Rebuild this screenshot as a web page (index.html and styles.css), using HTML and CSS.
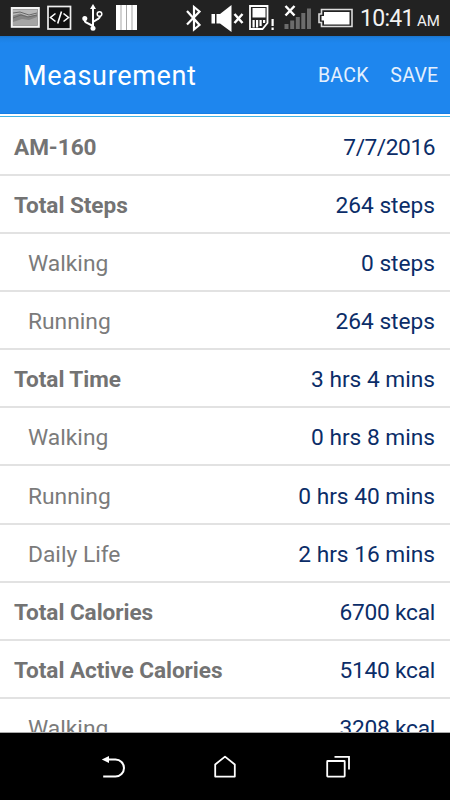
FILE: index.html
```
<!DOCTYPE html>
<html lang="en">
<head>
    <meta charset="UTF-8">
    <meta name="viewport" content="width=device-width, initial-scale=1.0">
    <title>Measurement</title>
    <link rel="stylesheet" href="styles.css">
</head>
<body>
    <div class="status-bar">
        <div class="status-icons">
            <!-- Screenshot saved -->
            <svg width="30" height="36" viewBox="0 0 30 36">
                <rect x="1.8" y="8" width="27" height="18.8" fill="#858585" stroke="#f4f4f4" stroke-width="2"/>
                <path d="M3 9.500h24v5l-9 2-8-3-7 2z" fill="#b9b9b9"/>
                <path d="M3 13l7-1 9 3 8-2M3 18l8-3 7 2 9-2" fill="none" stroke="#686868"/>
                <path d="M3 22l9-3 7 1 8-3v8H3z" fill="#a5a5a5"/>
            </svg>
            <!-- Developer -->
            <svg width="26" height="36" viewBox="0 0 26 36">
                <rect x="2" y="6.5" width="22.5" height="22.5" fill="#111" stroke="#eee" stroke-width="1.7"/>
                <path d="M9.5 13.5l-5 4 5 4M17.500 13.5l5 4-5 4M15.500 11.5l-3.8 12" fill="none" stroke="#fff" stroke-width="1.6"/>
            </svg>
            <!-- USB -->
            <svg width="24" height="36" viewBox="0 0 24 36">
                <path d="M11 8v20M11 26L4 22.500Q2.500 21.500 2.500 19M11 22l5-3q2-1 2-3" fill="none" stroke="#fff" stroke-width="2"/>
                <path d="M11 4l3 5H8z" fill="#fff"/>
                <circle cx="2.800" cy="18.500" r="2.500" fill="#fff"/>
                <circle cx="11" cy="28.300" r="2.500" fill="#fff"/>
                <circle cx="17.500" cy="14" r="2.300" fill="none" stroke="#fff" stroke-width="1.500"/>
            </svg>
            <!-- Carrier bars -->
            <svg width="22" height="36" viewBox="0 0 22 36">
                <rect y="5" width="21" height="25" fill="#a8a8a8"/>
                <path d="M0 5h4.500v25H0zM5.500 5h4.500v25H5.500zM11 5h4.500v25H11zM16.500 5h4.500v25h-4.500z" fill="#fff"/>
            </svg>
        </div>
        <div class="status-system">
            <!-- Bluetooth -->
            <svg class="bluetooth" width="18" height="36" viewBox="0 0 18 36">
                <path d="M2 11l12.500 14L9 29.500V7l5.500 4.500L2 24.500" fill="none" stroke="#fff" stroke-width="2.200"/>
            </svg>
            <!-- Muted -->
            <svg class="muted" width="34" height="36" viewBox="0 0 34 36">
                <path d="M1.500 14H5v9.500H1.500zM6.500 14H10L21.500 5v27L10 23.500H6.500z" fill="#fff"/>
                <path d="M24.500 14l8 9M32.500 14l-8 9" stroke="#fff" stroke-width="2.500"/>
            </svg>
            <!-- SD card warning -->
            <svg class="sd-card" width="28" height="36" viewBox="0 0 28 36">
                <path d="M2 6h17.500v17l-5 6H2z" fill="none" stroke="#fff" stroke-width="1.800"/>
                <path d="M4.500 8h13v9.500h-13zM4.500 20h2.200v7.500H4.500zM8 20h2.200v7.500H8zM11.500 20h2.200v6h-2.200zM15 20h2.200v3H15z" fill="#fff"/>
                <path d="M23.500 19h2.200v7h-2.200zM23.500 27.500h2.200V30h-2.200z" fill="#fff"/>
            </svg>
            <!-- No signal -->
            <svg class="signal" width="32" height="36" viewBox="0 0 32 36">
                <path d="M2.500 24h4v5h-4zM8.200 20.500h4V29h-4zM13.800 17h4v12h-4zM19.300 13h4v16h-4zM25 8.500h4V29h-4z" fill="#6c6c6c"/>
                <path d="M3.500 6l9 9.500M12.500 6l-9 9.500" stroke="#fff" stroke-width="2.500"/>
            </svg>
            <!-- Battery -->
            <svg width="37" height="36" viewBox="0 0 37 36">
                <path d="M4.500 9.500h30.500v17H4.500v-4H2v-8.500h2.500z" fill="none" stroke="#ddd" stroke-width="1.600"/>
                <path d="M7 12h25.500v12.500H7v-4H4.500v-4.500H7z" fill="#fff"/>
            </svg>
            <span class="clock">10:41</span>
            <span class="meridiem">AM</span>
        </div>
    </div>

    <header class="app-header">
        <h1>Measurement</h1>
        <div class="actions">
            <a class="back">BACK</a>
            <a class="save">SAVE</a>
        </div>
    </header>

    <ul class="results">
        <li class="total"><span class="label">AM-160</span><span class="value date">7/7/2016</span></li>
        <li class="total"><span class="label">Total Steps</span><span class="value">264 steps</span></li>
        <li><span class="label">Walking</span><span class="value">0 steps</span></li>
        <li><span class="label">Running</span><span class="value">264 steps</span></li>
        <li class="total"><span class="label">Total Time</span><span class="value">3 hrs 4 mins</span></li>
        <li><span class="label">Walking</span><span class="value">0 hrs 8 mins</span></li>
        <li><span class="label">Running</span><span class="value">0 hrs 40 mins</span></li>
        <li><span class="label">Daily Life</span><span class="value">2 hrs 16 mins</span></li>
        <li class="total"><span class="label">Total Calories</span><span class="value kcal">6700 kcal</span></li>
        <li class="total"><span class="label">Total Active Calories</span><span class="value kcal">5140 kcal</span></li>
        <li><span class="label">Walking</span><span class="value kcal">3208 kcal</span></li>
    </ul>

    <nav class="nav-bar">
        <svg width="26" height="26" viewBox="0 0 26 26">
            <path d="M7 5.500h8.500a8.500 8.500 0 0 1 0 17H3.200" fill="none" stroke="#fff" stroke-width="2"/>
            <path d="M1.800 5.500L9 2v7z" fill="#fff"/>
        </svg>
        <svg width="26" height="26" viewBox="0 0 26 26">
            <path d="M3.200 22.600V10.500L13 2.600l9.800 7.900v12.100z" fill="none" stroke="#fff" stroke-width="1.800" stroke-linejoin="round"/>
        </svg>
        <svg width="26" height="26" viewBox="0 0 26 26">
            <rect x="3.200" y="7" width="17.500" height="15.600" rx="0.500" fill="none" stroke="#fff" stroke-width="1.800"/>
            <path d="M10.500 2.800h14.500v12.700" fill="none" stroke="#fff" stroke-width="1.800"/>
        </svg>
    </nav>
</body>
</html>
```
FILE: styles.css
```
* {
    margin: 0;
    padding: 0;
    box-sizing: border-box;
}

html, body {
    width: 100%;
    height: 100%;
    overflow: hidden;
}

body {
    display: flex;
    flex-direction: column;
    background: #fff;
    font-family: Roboto, sans-serif;
}

svg {
    display: block;
    flex-shrink: 0;
}

/* Status bar */
.status-bar {
    flex: 0 0 36px;
    height: 36px;
    min-height: 0;
    display: flex;
    justify-content: space-between;
    padding: 0 9px 0 10px;
    background: #222;
    color: #f2f2f2;
}

.status-icons {
    display: flex;
    gap: 6px;
}

.status-icons svg:nth-child(3) {
    margin-left: 4px;
}

.status-icons svg:nth-child(4) {
    margin-left: 4px;
}

.status-system {
    display: flex;
    align-items: baseline;
    height: 36px;
}

.status-system svg {
    align-self: flex-start;
}

.bluetooth {
    margin-right: 7px;
}

.muted {
    margin-right: 4px;
}

.sd-card {
    margin-right: 5.5px;
}

.signal {
    margin-right: 3.5px;
}

.clock {
    width: 54px;
    margin-left: 6px;
    font-size: 23px;
    line-height: 37px;
    letter-spacing: -0.7px;
}

.meridiem {
    width: 24px;
    margin-left: 3px;
    font-size: 15px;
    line-height: 30px;
}

/* Header */
.app-header {
    flex: 0 0 81px;
    display: flex;
    align-items: center;
    justify-content: space-between;
    padding: 0 11.5px 2px 23px;
    background: linear-gradient(#1b74cb 0, #1c80e2 2px, #1e86ee 7px, #1e86ee 77px, #0f76dc 78px, #fff 78px, #fff 80px, #42b4e6 80px);
    color: #fff;
}

h1 {
    font-size: 27px;
    font-weight: 400;
    letter-spacing: 0.65px;
}

.actions {
    display: flex;
    gap: 21.5px;
    color: #e4f0fd;
    font-size: 19.5px;
    letter-spacing: 0.3px;
}

/* Measurement rows */
.results {
    flex: 1;
    min-height: 0;
    overflow: hidden;
    list-style: none;
    border-bottom: 1px solid #aaa;
}

.results li {
    height: 58.1px;
    display: flex;
    align-items: center;
    justify-content: space-between;
    padding: 3px 15px 0 28px;
    border-bottom: 2px solid #e2e2e2;
    font-size: 22.8px;
}

.results li:first-child {
    height: 59px;
}

.results .total {
    padding-left: 14px;
}

.label {
    color: #7b7b7b;
}

.total .label {
    color: #737373;
    font-size: 22.6px;
    font-weight: 700;
    letter-spacing: -0.05px;
}

.value {
    color: #0b2d68;
    font-size: 22.7px;
}

.date {
    letter-spacing: -0.45px;
}

.kcal {
    letter-spacing: -0.25px;
}

/* Navigation bar */
.nav-bar {
    flex: 0 0 67px;
    display: flex;
    justify-content: center;
    align-items: center;
    gap: 86px;
    background: #000;
}
```
